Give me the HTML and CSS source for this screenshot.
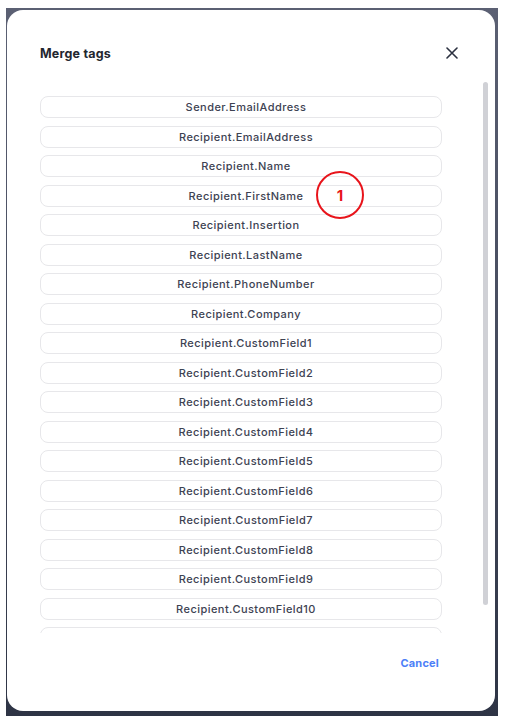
FILE: index.html
```html
<!DOCTYPE html>
<html>
<head>
<meta charset="utf-8">
<link rel="stylesheet" href="styles.css">
</head>
<body>
<div class="frame">
  <div class="dialog">
    <div class="header">
      <h2 class="title">Merge tags</h2>
      <button class="close" aria-label="Close">
        <svg width="12" height="12" viewBox="0 0 12 12"><path d="M1 1L11 11M11 1L1 11" stroke="#2b3140" stroke-width="1.6" stroke-linecap="round"/></svg>
      </button>
    </div>
    <div class="scroller">
      <div class="list">
        <div class="tag">Sender.EmailAddress</div>
        <div class="tag">Recipient.EmailAddress</div>
        <div class="tag">Recipient.Name</div>
        <div class="tag">Recipient.FirstName</div>
        <div class="tag">Recipient.Insertion</div>
        <div class="tag">Recipient.LastName</div>
        <div class="tag">Recipient.PhoneNumber</div>
        <div class="tag">Recipient.Company</div>
        <div class="tag">Recipient.CustomField1</div>
        <div class="tag">Recipient.CustomField2</div>
        <div class="tag">Recipient.CustomField3</div>
        <div class="tag">Recipient.CustomField4</div>
        <div class="tag">Recipient.CustomField5</div>
        <div class="tag">Recipient.CustomField6</div>
        <div class="tag">Recipient.CustomField7</div>
        <div class="tag">Recipient.CustomField8</div>
        <div class="tag">Recipient.CustomField9</div>
        <div class="tag">Recipient.CustomField10</div>
        <div class="tag">Recipient.Extra</div>
      </div>
      <div class="track"><div class="thumb"></div></div>
    </div>
    <div class="footer">
      <button class="cancel">Cancel</button>
    </div>
  </div>
  <div class="marker">1</div>
</div>
</body>
</html>
```
FILE: styles.css
```css
html, body {
  margin: 0;
  padding: 0;
  background: #ffffff;
}
body {
  font-family: "Inter", "Open Sans", sans-serif;
}
.frame {
  position: relative;
  margin: 8px 0 0 6px;
  width: 492px;
  height: 708px;
  box-sizing: border-box;
  padding: 2px 3px 5px 1px;
  background: linear-gradient(#5b6073, #2e3445);
}
.dialog {
  width: 488px;
  height: 701px;
  background: #ffffff;
  border-radius: 16px;
  display: flex;
  flex-direction: column;
  box-sizing: border-box;
  padding: 0 0 0 33px;
}
.header {
  display: flex;
  align-items: center;
  justify-content: space-between;
  height: 34px;
  margin-top: 26px;
  padding-right: 37px;
}
.title {
  margin: 0;
  font-size: 12.5px;
  font-weight: 700;
  color: #23262f;
  letter-spacing: 0.2px;
}
.close {
  border: 0;
  background: none;
  padding: 0;
  width: 12px;
  height: 12px;
  display: flex;
}
.scroller {
  margin-top: 12px;
  height: 551px;
  display: flex;
  overflow: hidden;
}
.list {
  width: 402px;
  padding-top: 14px;
  display: flex;
  flex-direction: column;
  gap: 7.5px;
}
.tag {
  flex: none;
  height: 22px;
  box-sizing: border-box;
  border: 1.5px solid #e7e7ea;
  border-radius: 8px;
  padding-left: 10px;
  display: flex;
  align-items: center;
  justify-content: center;
  font-size: 11px;
  font-weight: 500;
  color: #3d4252;
  letter-spacing: 0.45px;
}
.track {
  margin-left: 41px;
  width: 5px;
}
.thumb {
  width: 5px;
  height: 523px;
  border-radius: 3px;
  background: #d0d1d6;
}
.footer {
  display: flex;
  justify-content: flex-end;
  padding-right: 56px;
  margin-top: 23px;
}
.cancel {
  border: 0;
  background: none;
  padding: 0;
  font-family: inherit;
  font-size: 11px;
  font-weight: 700;
  color: #4d7ff7;
  letter-spacing: 0.2px;
}
.marker {
  position: absolute;
  left: 310px;
  top: 163px;
  width: 48px;
  height: 48px;
  box-sizing: border-box;
  border: 2.5px solid #e8141b;
  border-radius: 50%;
  display: flex;
  align-items: center;
  justify-content: center;
  color: #e8141b;
  font-weight: 700;
  font-size: 15px;
}
```
